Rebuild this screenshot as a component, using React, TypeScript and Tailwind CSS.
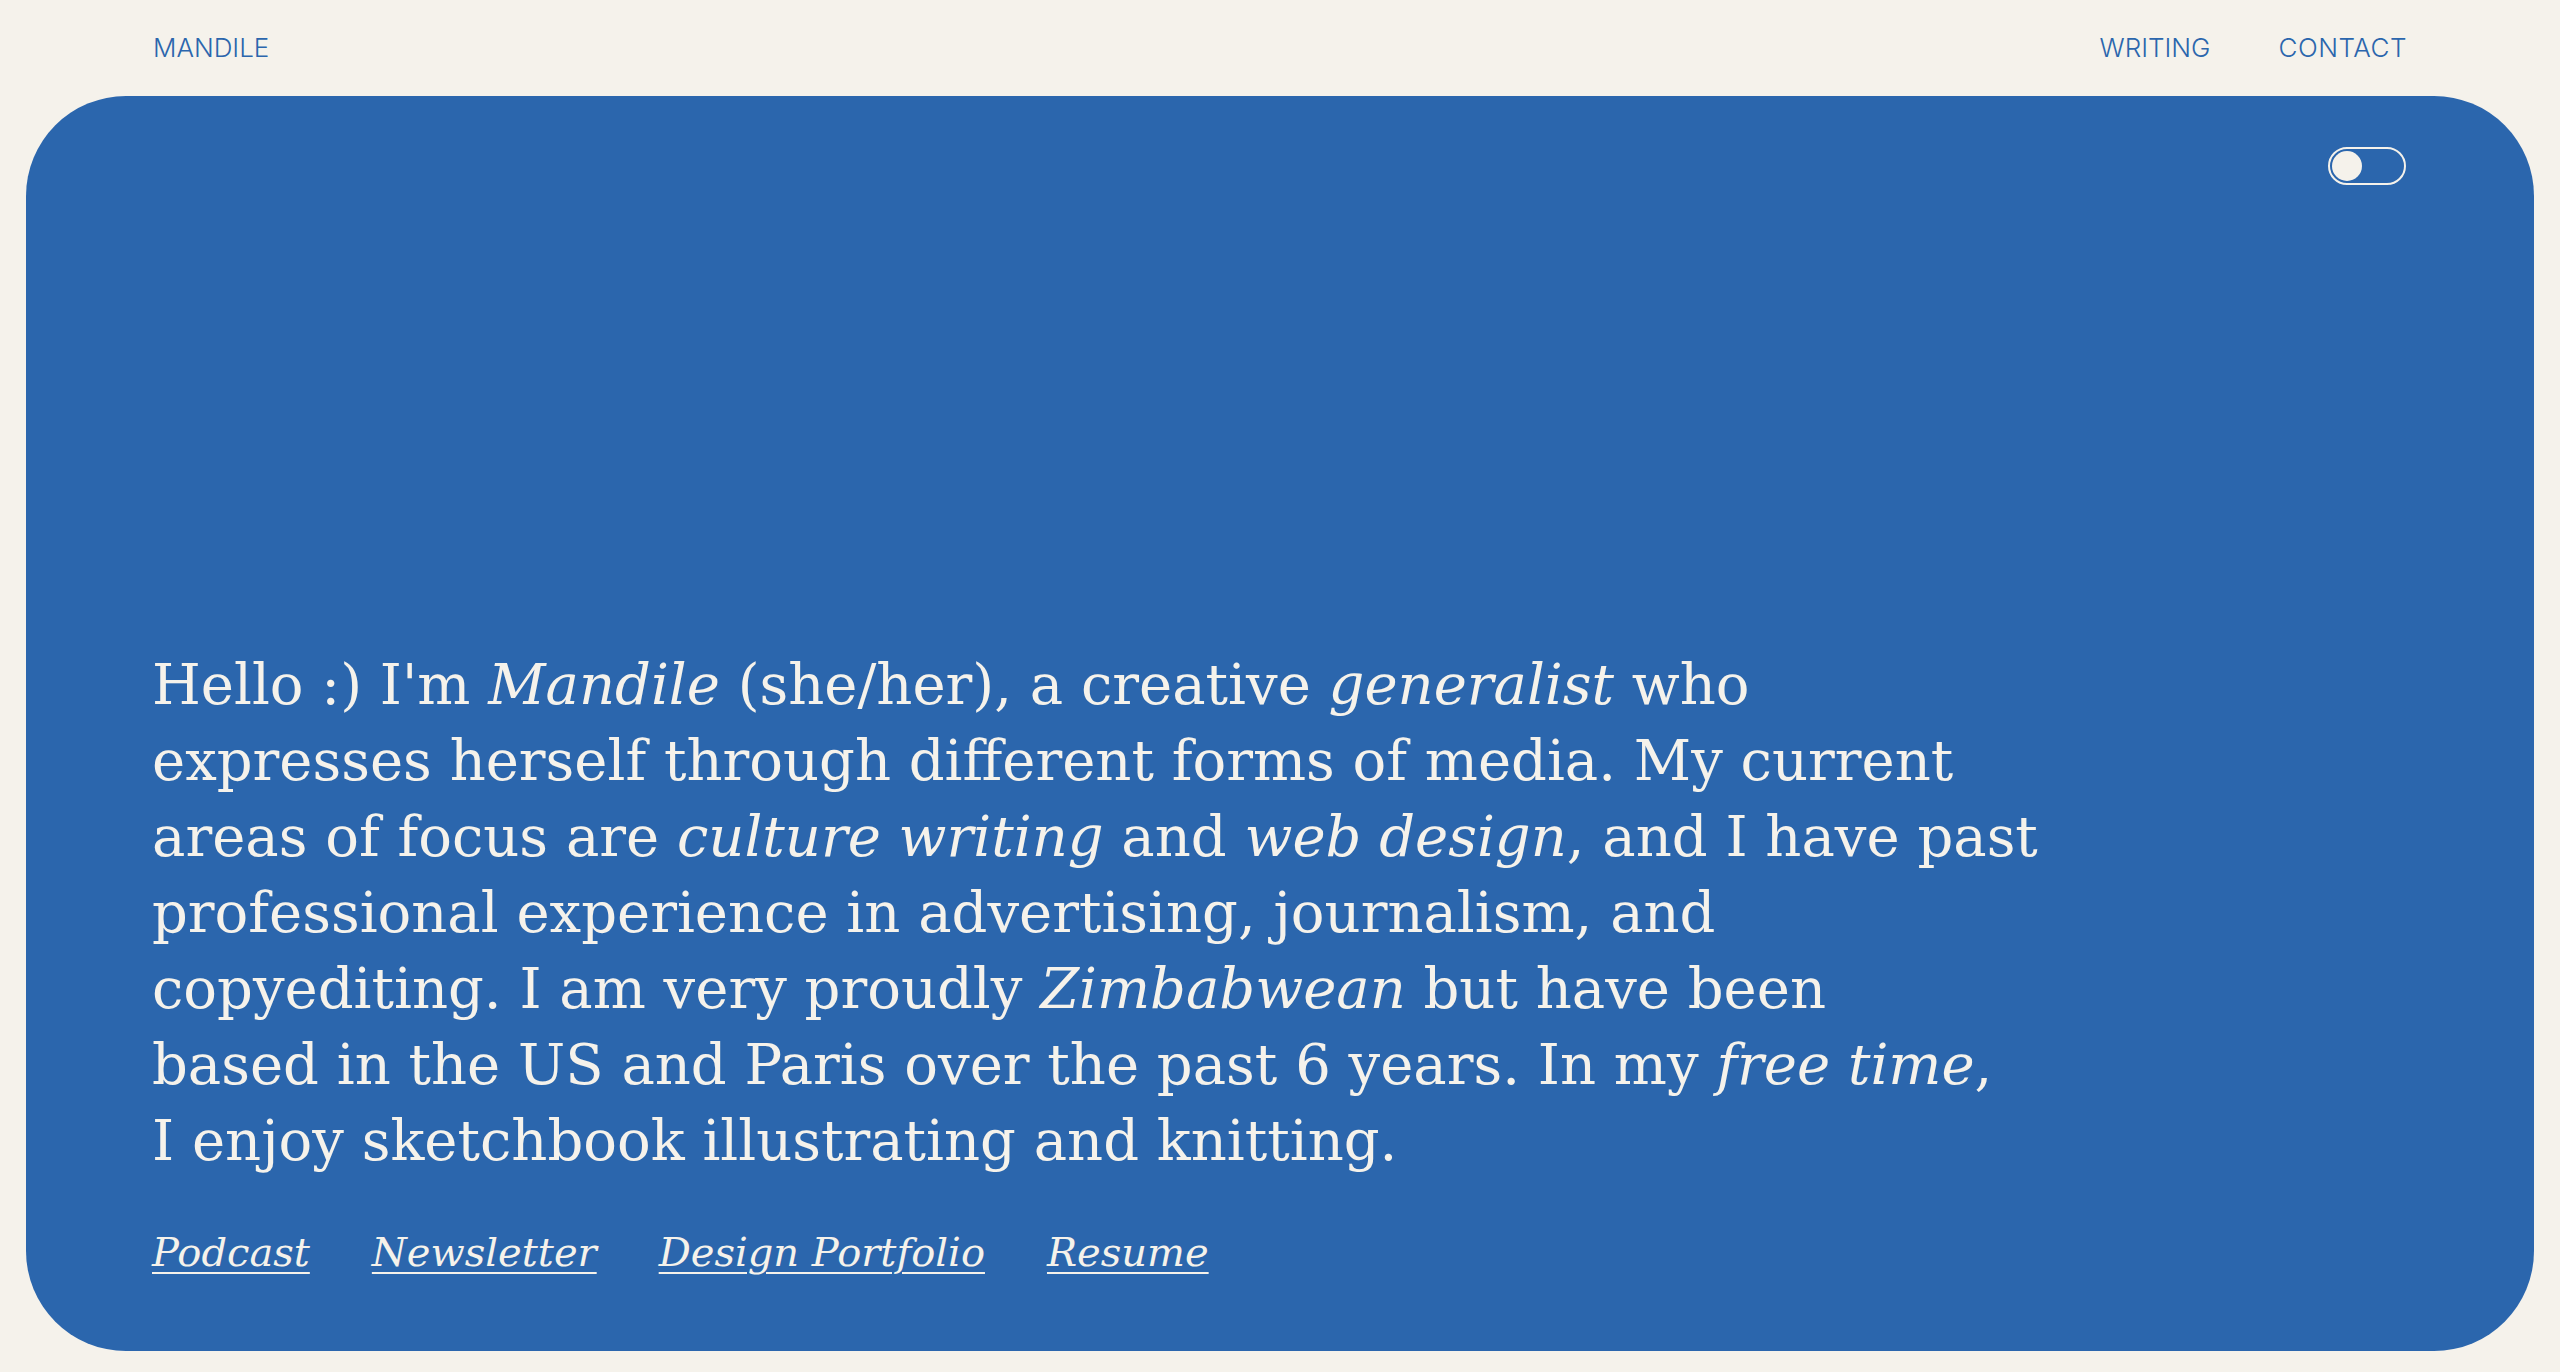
import React from 'react';

const serif = { fontFamily: '"DejaVu Serif", "Liberation Serif", serif' };

function ThemeToggle() {
  return (
    <button
      type="button"
      aria-label="Toggle theme"
      className="flex h-[38px] w-[78px] items-center rounded-full border-2 border-[#f5f2eb] px-[2px]"
    >
      <span className="block h-[30px] w-[30px] rounded-full bg-[#f5f2eb]" />
    </button>
  );
}

const links = ['Podcast', 'Newsletter', 'Design Portfolio', 'Resume'];

export default function App() {
  return (
    <div className="flex min-h-screen flex-col bg-[#f5f2eb] px-[26px] pb-[21px]">
      <header
        className="flex h-[94px] items-center justify-between px-[127px] text-[26px] font-light uppercase text-[#2b66ad]"
        style={{ fontFamily: '"Inter", "Open Sans", sans-serif' }}
      >
        <a href="#">Mandile</a>
        <nav className="flex gap-[68px]">
          <a href="#">Writing</a>
          <a href="#" className="tracking-[0.02em]">Contact</a>
        </nav>
      </header>

      <main className="mt-[2px] flex flex-1 flex-col justify-between rounded-[100px] bg-[#2b66ad] pb-[70px] pl-[126px] pr-[128px] pt-[51px] text-[#f5f2eb]">
        <div className="flex justify-end">
          <ThemeToggle />
        </div>

        <div style={serif}>
          <p className="text-[56px] leading-[76px]">
            Hello :) I'm <em>Mandile</em> (she/her), a creative <em>generalist</em> who
            <br />
            expresses herself through different forms of media. My current
            <br />
            areas of focus are <em>culture writing</em> and <em>web design</em>, and I have past
            <br />
            professional experience in advertising, journalism, and
            <br />
            copyediting. I am very proudly <em>Zimbabwean</em> but have been
            <br />
            based in the US and Paris over the past 6 years. In my <em>free time</em>,
            <br />
            I enjoy sketchbook illustrating and knitting.
          </p>

          <div className="mt-[44px] flex gap-[62px] text-[40px] italic leading-[58px]">
            {links.map((l) => (
              <a key={l} href="#" className="underline decoration-2 underline-offset-[6px]">
                {l}
              </a>
            ))}
          </div>
        </div>
      </main>
    </div>
  );
}
